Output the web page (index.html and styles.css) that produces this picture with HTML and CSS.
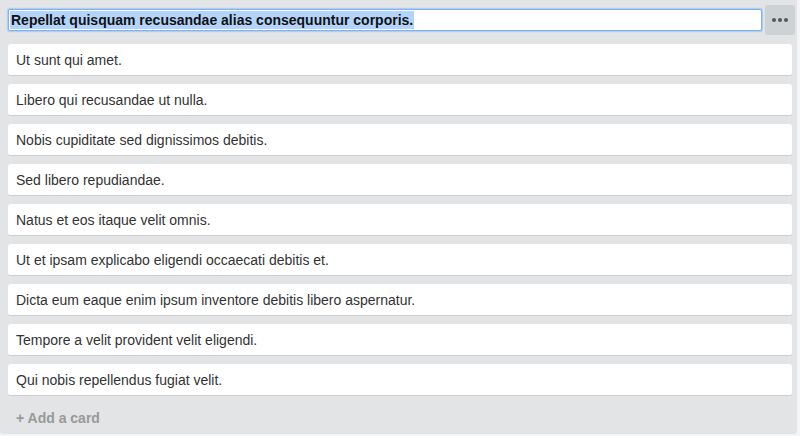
FILE: index.html
```html
<!DOCTYPE html>
<html>
<head>
<meta charset="utf-8">
<link rel="stylesheet" href="styles.css">
</head>
<body>
<div class="list">
  <div class="list-header">
    <div class="title-input"><span class="sel">Repellat quisquam recusandae alias consequuntur corporis.</span></div>
    <div class="menu-btn">
      <svg width="16" height="4" viewBox="0 0 16 4"><circle cx="2" cy="2" r="2" fill="#555"/><circle cx="8" cy="2" r="2" fill="#555"/><circle cx="14" cy="2" r="2" fill="#555"/></svg>
    </div>
  </div>
  <div class="cards">
    <div class="card">Ut sunt qui amet.</div>
    <div class="card">Libero qui recusandae ut nulla.</div>
    <div class="card">Nobis cupiditate sed dignissimos debitis.</div>
    <div class="card">Sed libero repudiandae.</div>
    <div class="card">Natus et eos itaque velit omnis.</div>
    <div class="card">Ut et ipsam explicabo eligendi occaecati debitis et.</div>
    <div class="card">Dicta eum eaque enim ipsum inventore debitis libero aspernatur.</div>
    <div class="card">Tempore a velit provident velit eligendi.</div>
    <div class="card">Qui nobis repellendus fugiat velit.</div>
  </div>
  <div class="add-card">+ Add a card</div>
</div>
</body>
</html>
```
FILE: styles.css
```css
html, body {
  margin: 0;
  padding: 0;
  background: #f4f5f6;
}
body {
  font-family: "Liberation Sans", Arial, sans-serif;
  font-size: 14px;
  color: #333;
}
.list {
  width: 797px;
  height: 434px;
  background: #e2e4e6;
  border-radius: 0 0 3px 3px;
  box-sizing: border-box;
  display: flex;
  flex-direction: column;
}
.list-header {
  display: flex;
  align-items: flex-start;
  padding: 5px 2px 0 8px;
  height: 44px;
  box-sizing: border-box;
}
.title-input {
  margin-top: 4px;
  width: 754px;
  height: 22px;
  box-sizing: border-box;
  background: #fff;
  border: 1px solid #7fb2ee;
  box-shadow: 0 0 1px 1px #a9cbf3;
  border-radius: 2px;
  padding: 0 0 0 1px;
  font-weight: bold;
  font-size: 14px;
  line-height: 20px;
  color: #111;
  white-space: nowrap;
  overflow: hidden;
}
.sel {
  background: #b3d4fc;
  padding: 1px 1px;
}
.menu-btn {
  margin-left: 3px;
  width: 30px;
  height: 30px;
  background: #cdd2d4;
  border-radius: 3px;
  display: flex;
  align-items: center;
  justify-content: center;
}
.cards {
  display: flex;
  flex-direction: column;
  gap: 8px;
  padding: 0 5px 0 8px;
}
.card {
  background: #fff;
  border-radius: 3px;
  height: 32px;
  box-sizing: border-box;
  padding: 6px 8px;
  line-height: 20px;
  border-bottom: 1px solid #ccc;
  color: #333;
}
.add-card {
  padding: 0 16px;
  margin-top: 14px;
  font-weight: bold;
  color: #999;
  line-height: 16px;
}
```
